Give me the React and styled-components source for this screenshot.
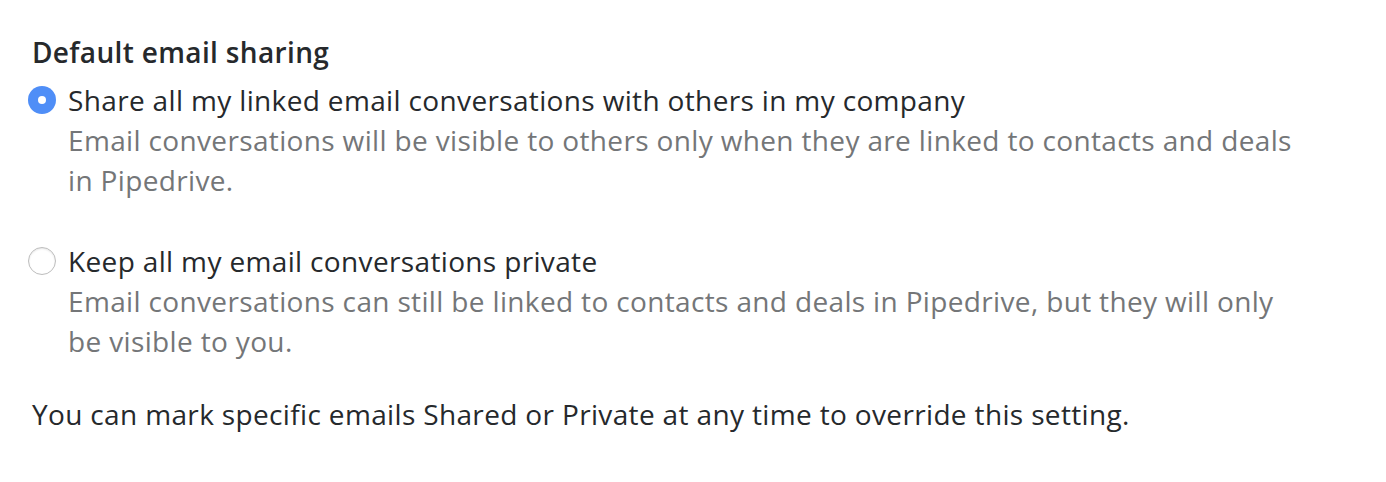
import styled, { createGlobalStyle } from "styled-components";

const GlobalStyle = createGlobalStyle`
  body {
    margin: 0;
    background: #ffffff;
    font-family: "Open Sans", "Noto Sans", sans-serif;
    -webkit-font-smoothing: antialiased;
  }
`;

const Page = styled.div`
  padding: 32px 32px 0 32px;
  color: #26292c;
  font-size: 28px;
  letter-spacing: 0.35px;
  line-height: 40px;
`;

const Title = styled.h3`
  margin: 0 0 8px 0;
  font-size: 28px;
  font-weight: 600;
  line-height: 40px;
  color: #26292c;
`;

const Option = styled.label`
  display: flex;
  align-items: flex-start;
  gap: 12px;
  margin-bottom: ${({ $spaced }) => ($spaced ? "41px" : "0")};
  cursor: pointer;
`;

const Radio = styled.span`
  flex: none;
  box-sizing: border-box;
  width: 28px;
  height: 28px;
  margin-top: 6px;
  margin-left: -4px;
  border-radius: 50%;
  display: flex;
  align-items: center;
  justify-content: center;
  background: ${({ $checked }) => ($checked ? "#4f8ef7" : "#ffffff")};
  border: ${({ $checked }) => ($checked ? "none" : "1.5px solid #bdbdbd")};
  box-shadow: ${({ $checked }) =>
    $checked ? "none" : "inset 0 1px 2px rgba(0, 0, 0, 0.1)"};

  &::after {
    content: "";
    display: ${({ $checked }) => ($checked ? "block" : "none")};
    width: 8px;
    height: 8px;
    border-radius: 50%;
    background: #ffffff;
  }
`;

const OptionText = styled.div`
  display: flex;
  flex-direction: column;
  max-width: 1236px;
`;

const OptionLabel = styled.span`
  color: #26292c;
`;

const OptionHint = styled.span`
  color: #747678;
`;

const Note = styled.p`
  margin: 33px 0 0 0;
  color: #26292c;
`;

const options = [
  {
    label: "Share all my linked email conversations with others in my company",
    hint: "Email conversations will be visible to others only when they are linked to contacts and deals in Pipedrive.",
    checked: true,
  },
  {
    label: "Keep all my email conversations private",
    hint: "Email conversations can still be linked to contacts and deals in Pipedrive, but they will only be visible to you.",
    checked: false,
  },
];

export default function App() {
  return (
    <>
      <GlobalStyle />
      <Page>
        <Title>Default email sharing</Title>
        {options.map((o, i) => (
          <Option key={o.label} $spaced={i < options.length - 1}>
            <Radio $checked={o.checked} />
            <OptionText>
              <OptionLabel>{o.label}</OptionLabel>
              <OptionHint>{o.hint}</OptionHint>
            </OptionText>
          </Option>
        ))}
        <Note>
          You can mark specific emails Shared or Private at any time to override this setting.
        </Note>
      </Page>
    </>
  );
}
